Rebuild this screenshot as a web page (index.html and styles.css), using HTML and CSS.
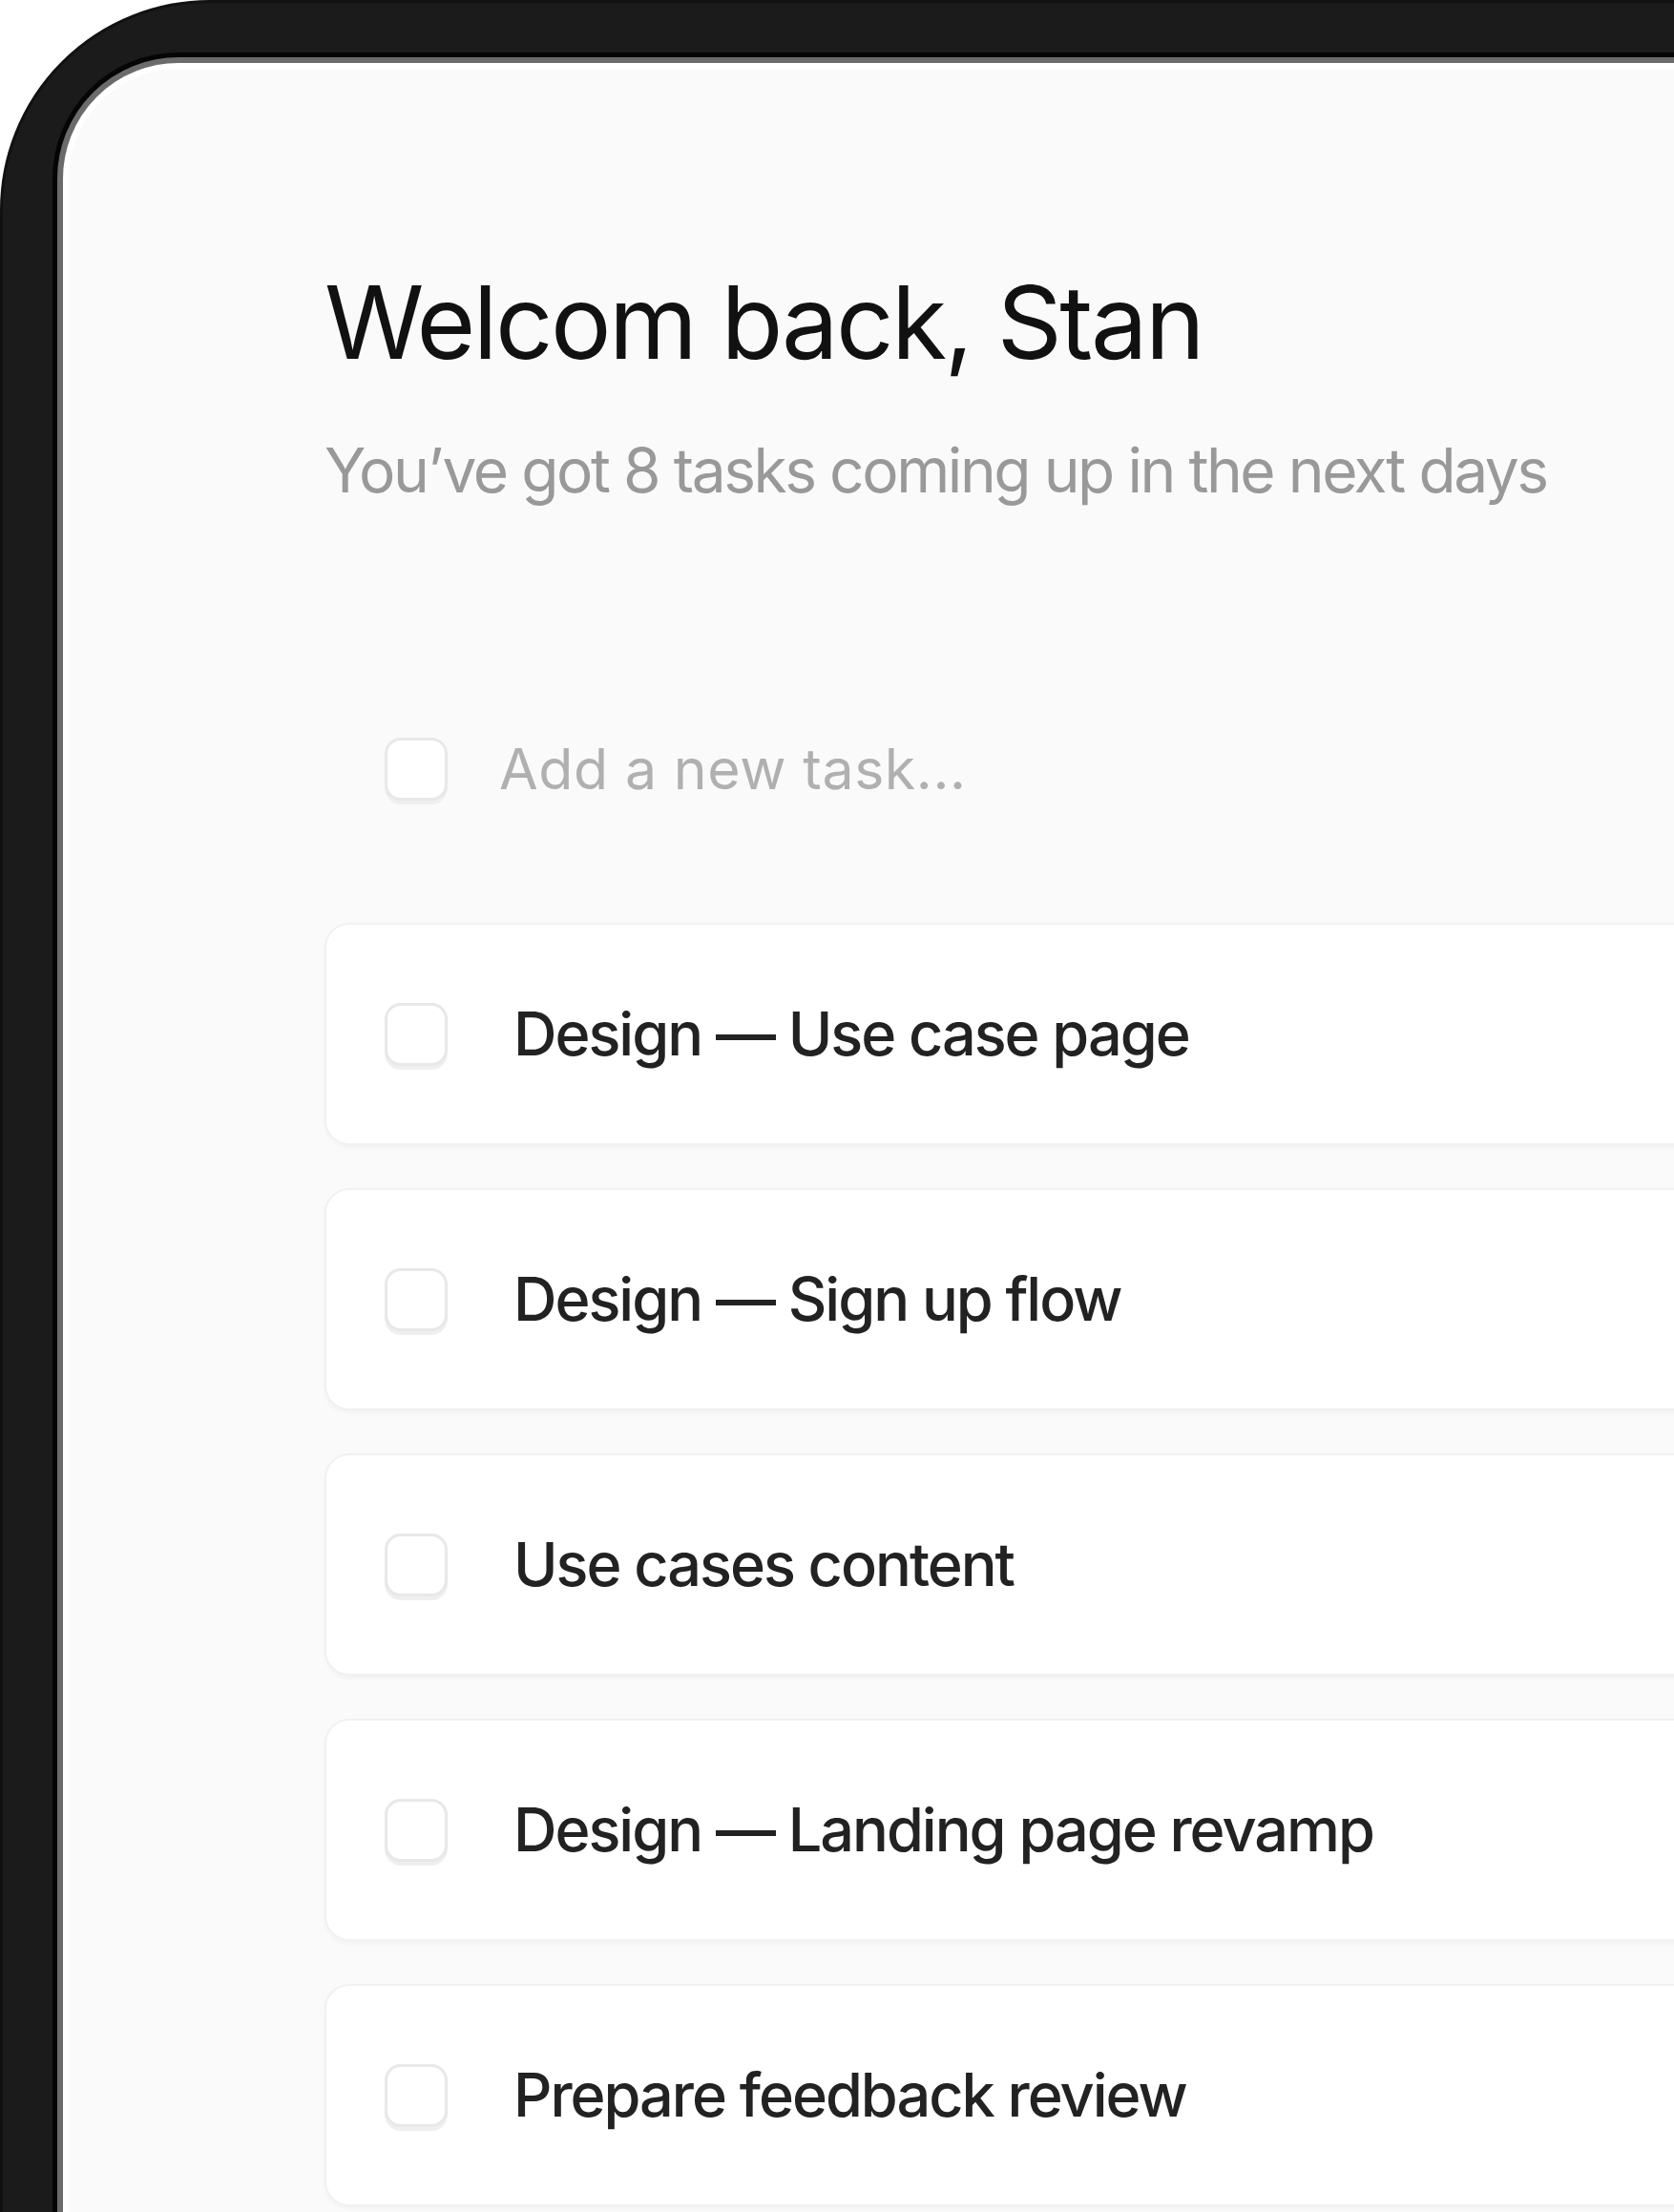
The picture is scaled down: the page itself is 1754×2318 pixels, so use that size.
FILE: index.html
```html
<!DOCTYPE html>
<html lang="en">
<head>
<meta charset="utf-8">
<title>Tasks</title>
<link rel="stylesheet" href="styles.css">
</head>
<body>
<div class="device">
  <div class="screen">
    <main class="content">
      <h1 class="title">Welcom back, Stan</h1>
      <p class="subtitle">You’ve got 8 tasks coming up in the next days</p>
      <ul class="tasks">
        <li class="task task--new"><span class="check"></span><span class="placeholder">Add a new task...</span></li>
        <li class="task task--card"><span class="check"></span><span class="label">Design — Use case page</span></li>
        <li class="task task--card"><span class="check"></span><span class="label">Design — Sign up flow</span></li>
        <li class="task task--card"><span class="check"></span><span class="label">Use cases content</span></li>
        <li class="task task--card"><span class="check"></span><span class="label">Design — Landing page revamp</span></li>
        <li class="task task--card"><span class="check"></span><span class="label">Prepare feedback review</span></li>
      </ul>
    </main>
  </div>
</div>
</body>
</html>
```
FILE: styles.css
```css
html, body {
  margin: 0;
  padding: 0;
  background: #ffffff;
  overflow: hidden;
}

body {
  width: 1754px;
  height: 2318px;
  font-family: Inter, "Noto Sans", sans-serif;
}

.device {
  box-sizing: border-box;
  width: 2600px;
  height: 3200px;
  background: #1b1b1b;
  border: 3px solid #111111;
  border-radius: 220px;
  padding: 57px;
}

.screen {
  box-sizing: border-box;
  height: 100%;
  border: 6px solid #6b6b6b;
  border-radius: 127px;
  box-shadow: 0 0 0 5px #050505, inset 0 0 0 6px #ffffff;
  background: #fafafa;
  padding: 219px 0 0 274px;
}

.title {
  margin: 0;
  font-size: 106px;
  font-weight: 400;
  line-height: 1;
  letter-spacing: -0.024em;
  color: #111111;
}

.subtitle {
  margin: 70px 0 0;
  font-size: 64px;
  line-height: 1;
  letter-spacing: -0.038em;
  color: #999999;
}

.tasks {
  list-style: none;
  margin: 164px 0 0;
  padding: 0;
  width: 2000px;
  display: flex;
  flex-direction: column;
  gap: 45px;
}

.task {
  box-sizing: border-box;
  height: 233px;
  display: flex;
  align-items: center;
  padding-left: 63px;
}

.task--new {
  gap: 54px;
}

.task--card {
  background: #ffffff;
  border: 2px solid #f1f1f1;
  border-radius: 26px;
  box-shadow: 0 3px 4px rgba(0, 0, 0, 0.03);
  padding-left: 61px;
  gap: 69px;
}

.check {
  flex: none;
  box-sizing: border-box;
  width: 66px;
  height: 66px;
  border: 3px solid #e8e8e8;
  border-radius: 17px;
  background: #ffffff;
  box-shadow: 0 4px 0 #efefef;
}

.placeholder {
  font-size: 59px;
  line-height: 1;
  letter-spacing: 0.01em;
  color: #b0b0b0;
}

.label {
  font-size: 63px;
  font-weight: 500;
  line-height: 1;
  letter-spacing: -0.032em;
  color: #222222;
}
```
